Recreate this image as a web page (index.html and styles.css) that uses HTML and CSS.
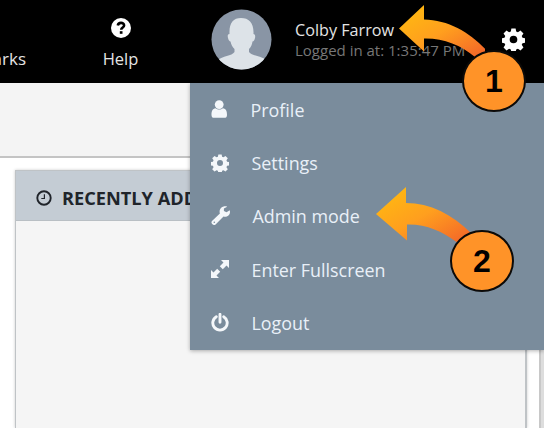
FILE: index.html
```
<!DOCTYPE html>
<html lang="en">
<head>
<meta charset="utf-8">
<title>Dashboard</title>
<link rel="stylesheet" href="styles.css">
</head>
<body>
<svg width="0" height="0" class="defs" aria-hidden="true">
  <defs>
    <linearGradient id="flame" x1="0" y1="0" x2="1" y2="1">
      <stop offset="0.1" stop-color="#ffb811"/>
      <stop offset="0.5" stop-color="#ff9f1e"/>
      <stop offset="1" stop-color="#f2602a"/>
    </linearGradient>
    <symbol id="cog" viewBox="0 0 24 24">
      <path fill-rule="evenodd" d="M9.8 0.5h4.4l.6 3.1 1.8.8 2.7-1.8 3.1 3.1-1.8 2.7.8 1.8 3.1.6v4.4l-3.1.6-.8 1.8 1.8 2.7-3.1 3.1-2.7-1.8-1.8.8-.6 3.1H9.800l-.6-3.1-1.800-.8-2.700 1.800-3.100-3.100 1.800-2.700-.8-1.800-3.100-.6V10.800l3.100-.6.8-1.800L1.600 5.700l3.100-3.100 2.700 1.800 1.800-.8zM12 8a4 4 0 1 0 0 8 4 4 0 0 0 0-8z"/>
    </symbol>
  </defs>
</svg>
<header class="topbar">
  <div class="nav-item bookmarks"><span>Bookmarks</span></div>
  <div class="nav-item help">
    <svg width="20" height="20" viewBox="0 0 20 20"><circle cx="10" cy="10" r="10" fill="#fff"/><path d="M6.800 7.500C7.100 5.700 8.500 4.900 10 4.900c1.700 0 3.100 1 3.100 2.600 0 2-2.900 2-2.900 4.300" fill="none" stroke="#000" stroke-width="2.600"/><rect x="8.800" y="13.200" width="2.700" height="2.600"/></svg>
    <span>Help</span>
  </div>
  <svg class="avatar" width="61" height="61" viewBox="0 0 61 61">
    <defs><clipPath id="round"><circle cx="30.500" cy="30.500" r="30"/></clipPath></defs>
    <circle cx="30.500" cy="30.500" r="30" fill="#8995a5"/>
    <path clip-path="url(#round)" fill="#dde3e8" d="M30 9C22 9 18 14 18.500 25c-2 0-2 2-1.500 4 .5 2 1.500 3.500 2.500 3.500.7 3 2 5.500 4 7.500v3C21 47 11 47 7 51v11h48V51c-4-4-14-4-17-8v-3c2-2 3-4.500 3.500-7.500 1.200 0 2-1.500 2.500-3.500.5-2 0-4-1.500-4C43 14 38 9 30 9z"/>
  </svg>
  <div class="user">
    <div class="user-name">Colby Farrow</div>
    <div class="user-time">Logged in at: 1:35:47 PM</div>
  </div>
  <svg class="gear" width="23" height="23" fill="#fff"><use href="#cog"/></svg>
</header>
<div class="toolbar"></div>
<main class="content">
  <section class="panel">
    <h2 class="panel-title">
      <svg width="16" height="16" viewBox="0 0 16 16" fill="none" stroke="#20242a"><circle cx="8" cy="8" r="6.700" stroke-width="1.900"/><path d="M8.400 4.300V8.500H5.300" stroke-width="1.200"/></svg>
      <span>RECENTLY ADDED</span>
    </h2>
  </section>
  <section class="next-panel"></section>
</main>
<nav class="menu">
  <a class="row profile"><svg width="17" height="18" viewBox="0 0 17 18"><path d="M4.600 8.200C1.500 8.500.5 11 .5 15c0 2 1 2.800 2.500 2.800h10.500c1.500 0 2.500-.8 2.500-2.800 0-4-1-6.500-4.100-6.800-2 1.700-5.300 1.700-7.300 0z"/><circle cx="8.200" cy="4.600" r="4.400"/></svg><span>Profile</span></a>
  <a class="row settings"><svg width="18" height="18"><use href="#cog"/></svg><span>Settings</span></a>
  <a class="row admin"><svg width="20" height="20" viewBox="0 0 20 20"><path fill-rule="evenodd" d="M18.700 4.300 15.500 6.300 12.900 4.900V2.600L16.200.7C12.500-.6 8.600 1.900 8.600 5.700c0 .7.100 1.300.3 1.800L1 14.900c-1.900 2.200 1.400 5.400 3.600 3.500l7.900-7.900C16.200 11.700 20.100 8.300 18.700 4.300zM3.300 15.500a.8.800 0 1 1 0 1.600.8.800 0 0 1 0-1.600z"/></svg><span>Admin mode</span></a>
  <a class="row full"><svg width="18" height="18" viewBox="0 0 18 18"><path d="M10 0H18v8l-2.500-2.500-3.700 3.700-3-3L12.500 2.500zM8 18H0v-8l2.500 2.500 3.700-3.700 3 3L5.500 15.500z"/></svg><span>Enter Fullscreen</span></a>
  <a class="row logout"><svg width="18" height="19" viewBox="0 0 18 19"><path d="M5.300 3.700A7.200 7.200 0 1 0 12.700 3.700M9 1.300v8" fill="none" stroke="#f4f7fa" stroke-width="2.900" stroke-linecap="round"/></svg><span>Logout</span></a>
</nav>
<svg class="callout-arrow first" width="86" height="52" viewBox="0 0 86 52"><path fill="url(#flame)" d="M0 23.500 25 0V14.500C50 15 72 28 88 46L76 52C62 40 44 33 25 33.500V46.500Z"/></svg>
<div class="badge one">1</div>
<svg class="callout-arrow second" width="96" height="56" viewBox="0 0 96 56"><path fill="url(#flame)" d="M0 27 30 0V16C54 16 76 27 96 47L82 56C66 44 50 37 31 37.500V53.500Z"/></svg>
<div class="badge two">2</div>
</body>
</html>
```
FILE: styles.css
```
* { box-sizing: border-box; }
body {
  margin: 0;
  width: 544px;
  height: 428px;
  overflow: hidden;
  position: relative;
  display: flex;
  flex-direction: column;
  background: #fff;
  font-family: "Open Sans", "Noto Sans", sans-serif;
  font-size: 17px;
}
svg { display: block; flex: none; }
.defs { position: absolute; }
.topbar {
  height: 83px;
  flex: none;
  display: flex;
  background: #000;
  color: #e4e4e4;
}
.nav-item {
  display: flex;
  flex-direction: column;
  align-items: center;
  line-height: 24px;
}
.nav-item span { margin-top: 9px; }
.bookmarks { width: 26px; align-items: flex-end; padding-top: 38px; }
.help { width: 189px; padding-top: 18px; font-size: 16.500px; }
.avatar { margin: 9px 0 0 -4px; }
.user { width: 172px; margin: 19px 0 0 23px; white-space: nowrap; }
.user-name { line-height: 22px; font-size: 16.200px; }
.user-time { line-height: 18px; font-size: 15px; color: #777; }
.gear { margin: 28px 0 0 35px; }
.toolbar {
  height: 75px;
  flex: none;
  background: #f4f4f4;
  border-bottom: 2px solid #c4c4c4;
}
.content { flex: 1; display: flex; padding: 12px 0 0 15px; }
.panel {
  width: 512px;
  border: 1px solid #bfc3c6;
  border-width: 1px 2px 0 1px;
  background: #f5f5f5;
  box-shadow: 0 0 3px #ccc;
}
.panel-title {
  display: flex;
  align-items: center;
  gap: 10px;
  height: 50px;
  margin: 0;
  padding: 4px 0 0 20px;
  background: #c4ccd4;
  border-bottom: 1px solid #b9bfc4;
  color: #20242a;
  font-size: 18.200px;
  font-weight: 700;
  white-space: nowrap;
}
.next-panel { width: 5px; margin-left: 12px; background: #ddd; border-left: 2px solid #c8c8c8; }
.menu {
  position: absolute;
  left: 190px;
  top: 83px;
  width: 354px;
  height: 267px;
  background: #7a8c9c;
  box-shadow: 0 1px 4px rgba(0, 0, 0, .3);
  color: #e9f0f8;
  fill: #f4f7fa;
  font-size: 17.900px;
}
.row { display: flex; align-items: center; height: 53.400px; padding-left: 21px; }
.row svg { margin-top: -1px; }
.row span { margin-left: 22.500px; }
.admin span { margin-left: 21.500px; }
.callout-arrow { position: absolute; }
.first { left: 399px; top: 5px; }
.second { left: 376px; top: 187px; }
.badge {
  position: absolute;
  display: flex;
  align-items: center;
  justify-content: center;
  width: 64px;
  height: 62px;
  border: 2px solid #0c0a08;
  border-radius: 50%;
  background: #ff9328;
  color: #000;
  font: 700 32px "Liberation Sans", sans-serif;
}
.one { left: 462px; top: 50px; }
.two { left: 450px; top: 230px; }
```
